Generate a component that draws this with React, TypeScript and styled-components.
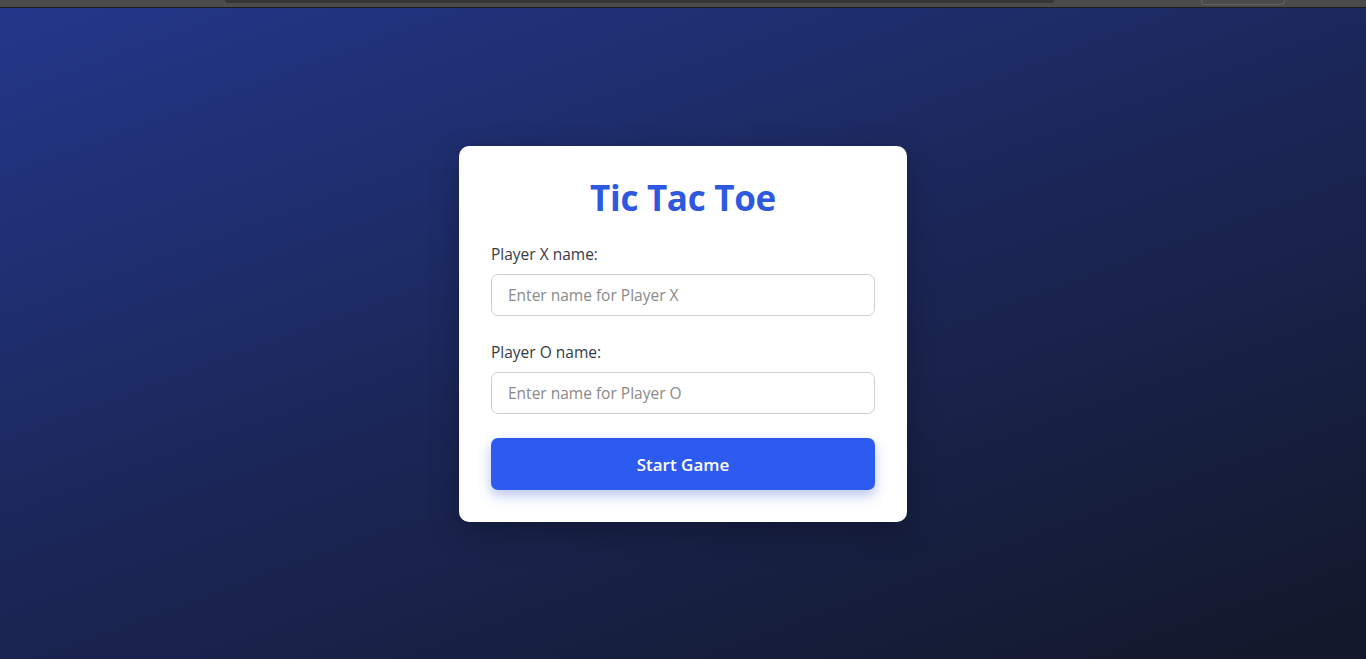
import React from "react";
import styled, { createGlobalStyle } from "styled-components";

const Global = createGlobalStyle`
  html, body { margin: 0; padding: 0; height: 100%; }
  body { font-family: "Open Sans", "Noto Sans", sans-serif; }
  #root { height: 100%; }
  * { box-sizing: border-box; }
`;

const Page = styled.div`
  height: 659px;
  display: flex;
  flex-direction: column;
  overflow: hidden;
`;

const ChromeStrip = styled.div`
  height: 8px;
  flex: none;
  background: #4b4b4b;
  border-bottom: 1px solid #1e1e1e;
  display: flex;
  align-items: flex-start;
`;

const AddressBar = styled.div`
  margin-left: 225px;
  width: 829px;
  height: 3px;
  background: #353535;
  border-radius: 0 0 4px 4px;
`;

const ChromeButton = styled.div`
  margin-left: 147px;
  width: 84px;
  height: 5px;
  border: 1px solid #626262;
  border-top: none;
  border-radius: 0 0 4px 4px;
`;

const Stage = styled.main`
  flex: 1;
  background: linear-gradient(160deg, #23378a 0%, #1b2656 50%, #121829 100%);
  display: flex;
  justify-content: center;
  padding-top: 138px;
`;

const Card = styled.div`
  width: 448px;
  height: 376px;
  background: #ffffff;
  border-radius: 10px;
  padding: 32px;
  display: flex;
  flex-direction: column;
  box-shadow: 0 10px 30px rgba(0, 0, 0, 0.25);
`;

const Title = styled.h1`
  margin: 0 0 24px;
  text-align: center;
  color: #2d59e0;
  font-size: 35px;
  line-height: 40px;
  font-weight: 700;
  letter-spacing: -0.3px;
`;

const Field = styled.div`
  display: flex;
  flex-direction: column;
  gap: 8px;
  margin-bottom: 24px;
`;

const Label = styled.label`
  font-size: 15.5px;
  line-height: 24px;
  color: #363a45;
`;

const Input = styled.input`
  height: 42px;
  border: 1px solid #cfcfd4;
  border-radius: 7px;
  padding: 0 16px;
  font-family: inherit;
  font-size: 15.5px;
  color: #333;
  outline: none;
  &::placeholder { color: #8a8a8a; }
`;

const Button = styled.button`
  height: 52px;
  border: none;
  border-radius: 7px;
  background: #2d5bf0;
  color: #ffffff;
  font-family: inherit;
  font-size: 17px;
  font-weight: 600;
  cursor: pointer;
  box-shadow: 0 6px 14px rgba(45, 91, 240, 0.25), 0 4px 10px rgba(0, 0, 0, 0.08);
`;

export default function App() {
  return (
    <Page>
      <Global />
      <ChromeStrip>
        <AddressBar />
        <ChromeButton />
      </ChromeStrip>
      <Stage>
        <Card>
          <Title>Tic Tac Toe</Title>
          <Field>
            <Label htmlFor="px">Player X name:</Label>
            <Input id="px" placeholder="Enter name for Player X" />
          </Field>
          <Field>
            <Label htmlFor="po">Player O name:</Label>
            <Input id="po" placeholder="Enter name for Player O" />
          </Field>
          <Button>Start Game</Button>
        </Card>
      </Stage>
    </Page>
  );
}
